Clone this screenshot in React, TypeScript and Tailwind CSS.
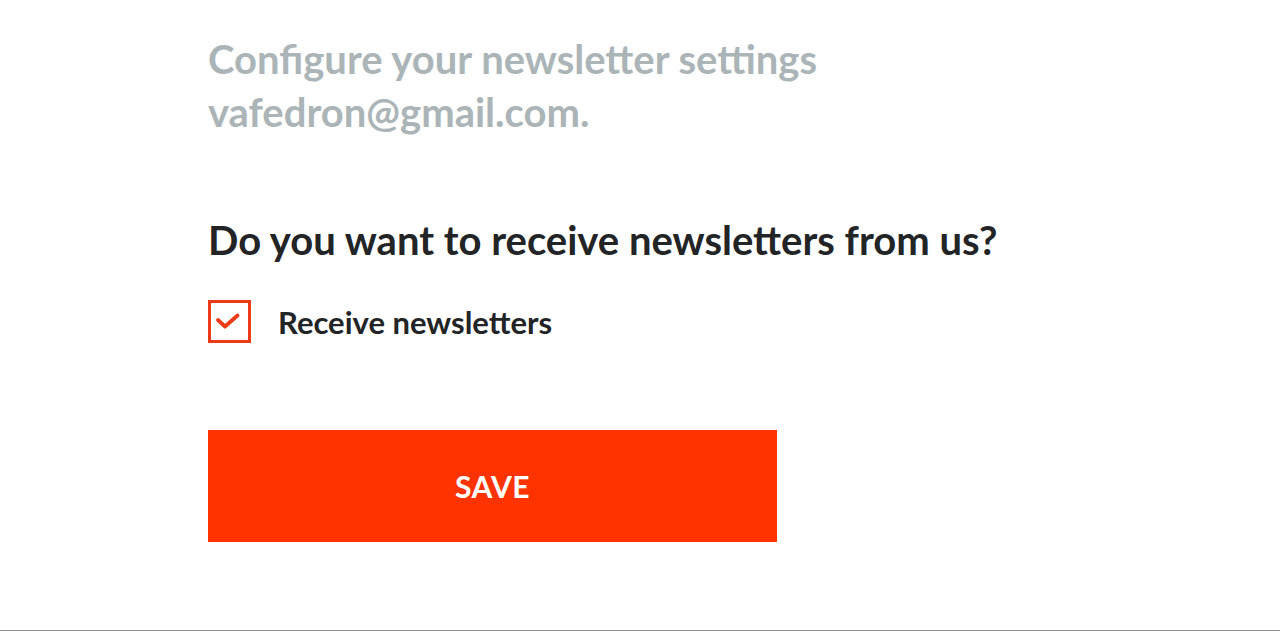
import React from "react";

export default function App() {
  return (
    <div className="h-[631px] w-full bg-white border-b border-[#8f8f8f] flex flex-col pl-[208px] pt-[33px]" style={{ fontFamily: "Lato, 'Liberation Sans', sans-serif" }}>
      <p className="text-[40px] leading-[53px] font-bold text-[#abb5b8]">
        Configure your newsletter settings
        <br />
        vafedron@gmail.com.
      </p>
      <h2 className="mt-[79px] text-[40px] leading-[44px] font-bold text-[#222426]">
        Do you want to receive newsletters from us?
      </h2>
      <label className="mt-[38px] flex items-center gap-[27px]">
        <span className="w-[43px] h-[43px] border-[3px] border-[#ee3b17] flex items-center justify-center">
          <svg width="37" height="37" viewBox="0 0 37 37" fill="none">
            <path d="M7 17 L14 23.5 L26.5 12.5" stroke="#ee3b17" strokeWidth="3.8" strokeLinecap="round" strokeLinejoin="round" />
          </svg>
        </span>
        <span className="text-[31px] leading-[38px] font-bold text-[#222426]">Receive newsletters</span>
      </label>
      <button className="mt-[87px] w-[569px] h-[112px] bg-[#ff3300] text-white text-[30px] font-bold tracking-[0.5px]">
        SAVE
      </button>
    </div>
  );
}
